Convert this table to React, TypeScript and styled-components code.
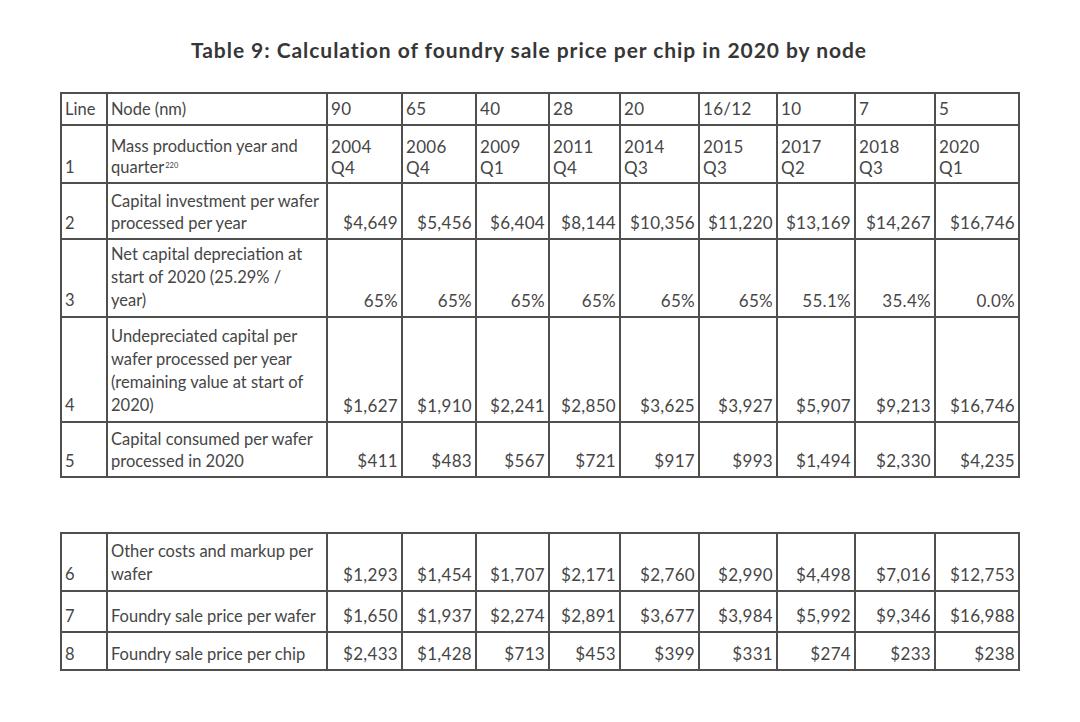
import React from "react";
import styled, { createGlobalStyle } from "styled-components";

const GlobalStyle = createGlobalStyle`
  html, body { margin: 0; padding: 0; background: #ffffff; }
  body { font-family: Lato, "Noto Sans", sans-serif; color: #3d3d3d; }
`;

const Page = styled.div`
  width: 1080px;
  height: 722px;
  box-sizing: border-box;
  padding: 38px 0 0 60px;
  background: #ffffff;
`;

const Title = styled.h1`
  margin: 0 0 30px 0;
  width: 938px;
  text-align: center;
  font-family: Lato, "Noto Sans", sans-serif;
  font-weight: 700;
  font-size: 21px;
  line-height: 24px;
  color: #363636;
  letter-spacing: 0.95px;
`;

const Table = styled.table<{ $gap?: number }>`
  border-collapse: collapse;
  table-layout: fixed;
  width: 958px;
  margin-top: ${(p) => p.$gap ?? 0}px;
  border: 2px solid #4a4a4a;
`;

const Row = styled.tr<{ $h: number }>`
  height: ${(p) => p.$h}px;
`;

const Cell = styled.td<{ $align?: "left" | "right"; $lh?: number }>`
  border: 2px solid #4f4f4f;
  padding: 0 3px 4px 3px;
  vertical-align: bottom;
  text-align: ${(p) => p.$align ?? "left"};
  font-size: 16.5px;
  line-height: ${(p) => p.$lh ?? 22}px;
  color: #464646;
  white-space: pre-line;
  overflow: hidden;
`;

const NumCell = styled(Cell)`
  padding-right: 3px;
  padding-left: 3px;
  font-size: 17px;
  letter-spacing: 0.3px;
`;

const Sup = styled.sup`
  font-size: 7.5px;
  line-height: 0;
  vertical-align: 5px;
  margin-left: 1px;
`;

const colWidths = [46, 220, 75, 74, 73, 71, 79, 78, 78, 80, 84];

type RowData = {
  line: string;
  label: React.ReactNode;
  values: string[];
  h: number;
  lh?: number;
  align: "left" | "right";
};

const top: RowData[] = [
  {
    line: "Line",
    label: "Node (nm)",
    values: ["90", "65", "40", "28", "20", "16/12", "10", "7", "5"],
    h: 32,
    align: "left",
  },
  {
    line: "1",
    label: (
      <>
        {"Mass production year and\nquarter"}
        <Sup>220</Sup>
      </>
    ),
    values: [
      "2004\nQ4",
      "2006\nQ4",
      "2009\nQ1",
      "2011\nQ4",
      "2014\nQ3",
      "2015\nQ3",
      "2017\nQ2",
      "2018\nQ3",
      "2020\nQ1",
    ],
    h: 58,
    lh: 21,
    align: "left",
  },
  {
    line: "2",
    label: "Capital investment per wafer\nprocessed per year",
    values: ["$4,649", "$5,456", "$6,404", "$8,144", "$10,356", "$11,220", "$13,169", "$14,267", "$16,746"],
    h: 56,
    align: "right",
  },
  {
    line: "3",
    label: "Net capital depreciation at\nstart of 2020 (25.29% /\nyear)",
    values: ["65%", "65%", "65%", "65%", "65%", "65%", "55.1%", "35.4%", "0.0%"],
    h: 78,
    lh: 23,
    align: "right",
  },
  {
    line: "4",
    label: "Undepreciated capital per\nwafer processed per year\n(remaining value at start of\n2020)",
    values: ["$1,627", "$1,910", "$2,241", "$2,850", "$3,625", "$3,927", "$5,907", "$9,213", "$16,746"],
    h: 105,
    lh: 23,
    align: "right",
  },
  {
    line: "5",
    label: "Capital consumed per wafer\nprocessed in 2020",
    values: ["$411", "$483", "$567", "$721", "$917", "$993", "$1,494", "$2,330", "$4,235"],
    h: 55,
    align: "right",
  },
];

const bottom: RowData[] = [
  {
    line: "6",
    label: "Other costs and markup per\nwafer",
    values: ["$1,293", "$1,454", "$1,707", "$2,171", "$2,760", "$2,990", "$4,498", "$7,016", "$12,753"],
    h: 58,
    lh: 23,
    align: "right",
  },
  {
    line: "7",
    label: "Foundry sale price per wafer",
    values: ["$1,650", "$1,937", "$2,274", "$2,891", "$3,677", "$3,984", "$5,992", "$9,346", "$16,988"],
    h: 41,
    align: "right",
  },
  {
    line: "8",
    label: "Foundry sale price per chip",
    values: ["$2,433", "$1,428", "$713", "$453", "$399", "$331", "$274", "$233", "$238"],
    h: 38,
    align: "right",
  },
];

const DataTable: React.FC<{ rows: RowData[]; gap?: number }> = ({ rows, gap }) => (
  <Table $gap={gap}>
    <colgroup>
      {colWidths.map((w, i) => (
        <col key={i} style={{ width: w }} />
      ))}
    </colgroup>
    <tbody>
      {rows.map((r) => (
        <Row key={r.line} $h={r.h}>
          <Cell $lh={r.lh}>{r.line}</Cell>
          <Cell $lh={r.lh}>{r.label}</Cell>
          {r.values.map((v, i) => (
            <NumCell key={i} $align={r.align} $lh={r.lh}>
              {v}
            </NumCell>
          ))}
        </Row>
      ))}
    </tbody>
  </Table>
);

export default function App() {
  return (
    <>
      <GlobalStyle />
      <Page>
        <Title>Table 9: Calculation of foundry sale price per chip in 2020 by node</Title>
        <DataTable rows={top} />
        <DataTable rows={bottom} gap={54} />
      </Page>
    </>
  );
}
